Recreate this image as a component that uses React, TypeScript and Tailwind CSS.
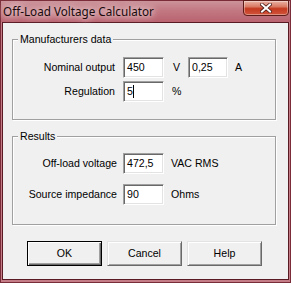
const inputCls =
  "h-[21px] bg-white border border-t-[#a0a0a0] border-l-[#a0a0a0] border-b-white border-r-white shadow-[inset_1px_1px_0_#696969,inset_-1px_-1px_0_#e3e3e3] pl-[2px] flex items-center leading-none";

function Field({ w, value, cursor }: { w: string; value: string; cursor?: boolean }) {
  return (
    <div className={`${inputCls} ${w}`}>
      <span className="pl-[1px]">{value}</span>
      {cursor && <span className="inline-block w-[1px] h-[13px] bg-black" />}
    </div>
  );
}

function Group({ title, h, children }: { title: string; h: string; children: React.ReactNode }) {
  return (
    <div
      className={`relative w-[264px] ${h} border border-[#a0a0a0] shadow-[inset_1px_1px_0_#fff,1px_1px_0_#fff]`}
    >
      <span className="absolute left-[5px] top-[-7px] bg-[#f0f0f0] px-[2px] leading-[13px]">{title}</span>
      {children}
    </div>
  );
}

function Btn({ label, def }: { label: string; def?: boolean }) {
  return (
    <div
      className={`w-[75px] h-[25px] flex items-center justify-center bg-[#f0f0f0] ${
        def
          ? "border border-black shadow-[inset_1px_1px_0_#fff,inset_-1px_-1px_0_#696969,inset_-2px_-2px_0_#a0a0a0]"
          : "border border-t-[#e3e3e3] border-l-[#e3e3e3] border-b-[#696969] border-r-[#696969] shadow-[inset_1px_1px_0_#fff,inset_-1px_-1px_0_#a0a0a0]"
      }`}
    >
      {label}
    </div>
  );
}

export default function App() {
  return (
    <div className="w-[291px] h-[283px] bg-[#c47d86] border border-[#7a2d38] flex flex-col font-['Liberation_Sans',Arial,sans-serif] text-[10.6px] text-black">
      <div className="relative h-[21px] shrink-0 bg-[linear-gradient(180deg,#cb939a_0%,#c27882_45%,#b9636f_100%)]">
        <div className="pl-[2px] pt-[1px] font-['Noto_Sans',sans-serif] text-[11.7px] leading-[18px] text-[#1a0a0c] [text-shadow:0_0_6px_#fff,0_0_10px_#f3dfe1]">
          Off-Load Voltage Calculator
        </div>
        <div className="absolute right-[1px] top-[-1px] w-[46px] h-[16px] rounded-b-[4px] border border-[#5e1c18] bg-[linear-gradient(180deg,#eab3a6_0%,#d97a64_40%,#c4391f_55%,#d0553c_100%)] shadow-[inset_0_0_0_1px_rgba(255,255,255,0.35)] flex items-center justify-center">
          <svg width="12" height="10" viewBox="0 0 12 10">
            <path d="M2 1.5 L10 8.5 M10 1.5 L2 8.5" stroke="#4a1a16" strokeWidth="3.6" strokeLinecap="square" />
            <path d="M2 1.5 L10 8.5 M10 1.5 L2 8.5" stroke="#ffffff" strokeWidth="2" strokeLinecap="square" />
          </svg>
        </div>
      </div>
      <div className="mx-[1px] mb-[2px] flex-1 border border-[#5a1a24] bg-[#f0f0f0] pl-[9px] pt-[16px]">
        <Group title="Manufacturers data" h="h-[81px]">
          <div className="pt-[17px]">
            <div className="flex items-center">
              <div className="w-[102px] text-right">Nominal output</div>
              <div className="ml-[8px]">
                <Field w="w-[41px]" value="450" />
              </div>
              <div className="ml-[9px] w-[15px]">V</div>
              <Field w="w-[40px]" value="0,25" />
              <div className="ml-[7px]">A</div>
            </div>
            <div className="flex items-center mt-[3px]">
              <div className="w-[102px] text-right">Regulation</div>
              <div className="ml-[8px]">
                <Field w="w-[41px]" value="5" cursor />
              </div>
              <div className="ml-[8px]">%</div>
            </div>
          </div>
        </Group>
        <div className="mt-[16px]">
          <Group title="Results" h="h-[89px]">
            <div className="pt-[16px]">
              <div className="flex items-center">
                <div className="w-[104px] text-right">Off-load voltage</div>
                <div className="ml-[6px]">
                  <Field w="w-[41px]" value="472,5" />
                </div>
                <div className="ml-[7px]">VAC RMS</div>
              </div>
              <div className="flex items-center mt-[10px]">
                <div className="w-[104px] text-right">Source impedance</div>
                <div className="ml-[6px]">
                  <Field w="w-[41px]" value="90" />
                </div>
                <div className="ml-[7px]">Ohms</div>
              </div>
            </div>
          </Group>
        </div>
        <div className="mt-[16px] ml-[15px] flex gap-[5px]">
          <Btn label="OK" def />
          <Btn label="Cancel" />
          <Btn label="Help" />
        </div>
      </div>
    </div>
  );
}
